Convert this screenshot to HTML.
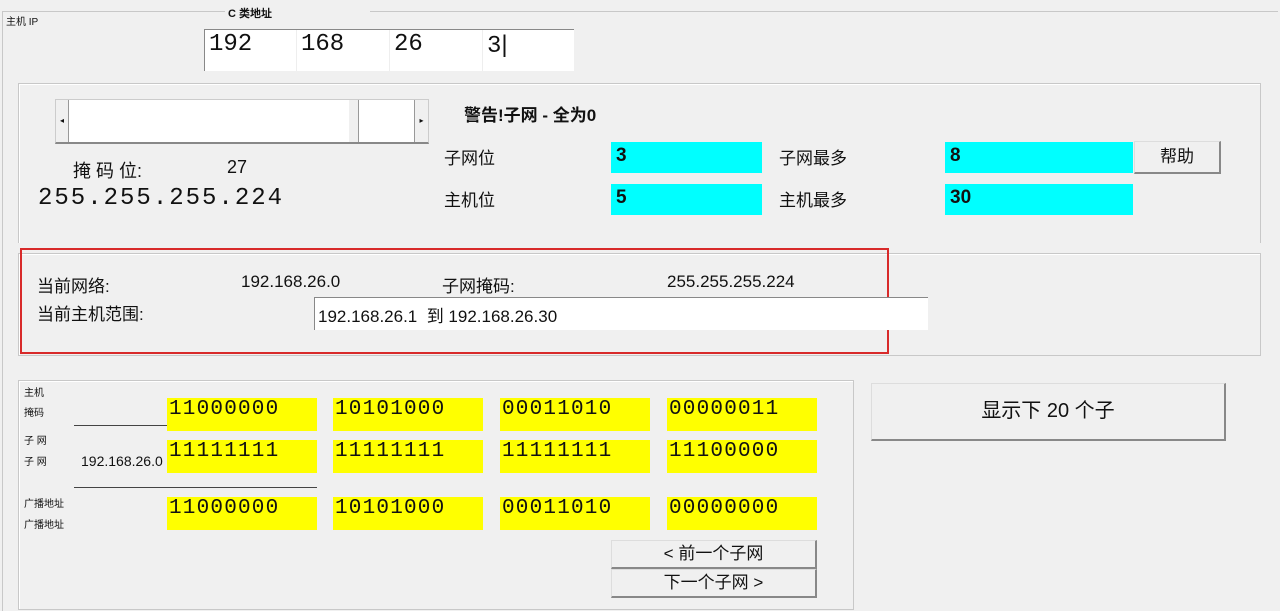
<!DOCTYPE html><html><head><meta charset="utf-8"><style>
body{margin:0;width:1280px;height:604px;background:#f0f0f0;position:relative;overflow:hidden;font-family:"Liberation Sans","Noto Sans CJK SC",sans-serif;color:#111}
div{position:absolute;box-sizing:border-box}
.t{white-space:nowrap}
.grp{border:1px solid #c8c8c8;box-shadow:1px 1px 0 #fff inset}
.y{background:#ffff00;font-family:"Liberation Mono",monospace;font-size:21px;letter-spacing:1.2px;padding-left:2px;line-height:24px}
.c{background:#00ffff;font-size:19px;font-weight:bold;padding-left:5px;line-height:26px}
.btn{background:#f0f0f0;border:1px solid #ddd;border-right:2px solid #888;border-bottom:2px solid #888;text-align:center}
</style></head><body>
<div style="left:2px;top:11px;width:1276px;height:600px;border-left:1px solid #c8c8c8;border-top:1px solid #c8c8c8"></div>
<div class="t" style="left:6px;top:13px;font-size:10px">主机 IP</div>
<div class="t" style="left:225px;top:5px;font-size:11px;font-weight:bold;background:#f0f0f0;padding:0 3px;width:145px;height:12px">C 类地址</div>
<div style="left:204px;top:29px;width:370px;height:42px;background:#fff;border-left:1px solid #888;border-top:1px solid #888"></div>
<div style="left:296px;top:30px;width:1px;height:41px;background:#eee"></div>
<div style="left:389px;top:30px;width:1px;height:41px;background:#eee"></div>
<div style="left:482px;top:30px;width:1px;height:41px;background:#eee"></div>
<div class="t" style="left:209px;top:31px;font-family:'Liberation Mono',monospace;font-size:24px">192</div>
<div class="t" style="left:301px;top:31px;font-family:'Liberation Mono',monospace;font-size:24px">168</div>
<div class="t" style="left:394px;top:31px;font-family:'Liberation Mono',monospace;font-size:24px">26</div>
<div class="t" style="left:487px;top:31px;font-family:'Liberation Mono',monospace;font-size:24px">3<span style="font-family:'Liberation Sans'">|</span></div>

<div class="grp" style="left:18px;top:83px;width:1243px;height:160px;border-bottom:none"></div>
<div style="left:55px;top:99px;width:374px;height:45px;background:#fff;border:1px solid #ccc;border-bottom:2px solid #888"></div>
<div style="left:56px;top:100px;width:13px;height:42px;background:#f0f0f0;border-right:1px solid #999;font-size:8px;line-height:42px;text-align:center">◂</div>
<div style="left:414px;top:100px;width:14px;height:42px;background:#f0f0f0;border-left:1px solid #999;font-size:8px;line-height:42px;text-align:center">▸</div>
<div style="left:349px;top:100px;width:10px;height:42px;background:#f0f0f0;border-right:1px solid #999"></div>
<div class="t" style="left:73px;top:157px;font-size:18px">掩 码 位:</div>
<div class="t" style="left:227px;top:157px;font-size:18px">27</div>
<div class="t" style="left:38px;top:185px;font-family:'Liberation Mono',monospace;font-size:24px;letter-spacing:2px">255.255.255.224</div>
<div class="t" style="left:464px;top:101px;font-size:17px;font-weight:bold">警告!子网 - 全为0</div>
<div class="t" style="left:444px;top:144px;font-size:17px">子网位</div>
<div class="t" style="left:444px;top:186px;font-size:17px">主机位</div>
<div class="t" style="left:779px;top:144px;font-size:17px">子网最多</div>
<div class="t" style="left:779px;top:186px;font-size:17px">主机最多</div>
<div class="c" style="left:611px;top:142px;width:151px;height:31px;line-height:28px">3</div>
<div class="c" style="left:611px;top:184px;width:151px;height:31px;line-height:28px">5</div>
<div class="c" style="left:945px;top:142px;width:188px;height:31px;line-height:28px">8</div>
<div class="c" style="left:945px;top:184px;width:188px;height:31px;line-height:28px">30</div>
<div class="btn" style="left:1134px;top:141px;width:87px;height:33px;font-size:17px;line-height:30px">帮助</div>

<div class="grp" style="left:18px;top:253px;width:1243px;height:103px"></div>
<div style="left:20px;top:248px;width:869px;height:106px;border:2px solid #d82a2a"></div>
<div class="t" style="left:37px;top:272px;font-size:17px">当前网络:</div>
<div class="t" style="left:241px;top:272px;font-size:17px">192.168.26.0</div>
<div class="t" style="left:442px;top:272px;font-size:17px">子网掩码:</div>
<div class="t" style="left:667px;top:272px;font-size:17px">255.255.255.224</div>
<div class="t" style="left:37px;top:300px;font-size:17px">当前主机范围:</div>
<div style="left:314px;top:297px;width:614px;height:33px;background:#fff;border-left:1px solid #888;border-top:1px solid #888;font-size:17px;padding:4px 3px">192.168.26.1 &nbsp;到 192.168.26.30</div>

<div class="grp" style="left:18px;top:380px;width:836px;height:230px"></div>
<div class="t" style="left:24px;top:384px;font-size:10px">主机</div>
<div class="t" style="left:24px;top:404px;font-size:10px">掩码</div>
<div class="t" style="left:24px;top:432px;font-size:10px">子 网</div>
<div class="t" style="left:24px;top:453px;font-size:10px">子 网</div>
<div class="t" style="left:24px;top:495px;font-size:10px">广播地址</div>
<div class="t" style="left:24px;top:516px;font-size:10px">广播地址</div>
<div style="left:74px;top:425px;width:94px;height:1px;background:#444"></div>
<div style="left:74px;top:487px;width:243px;height:1px;background:#444"></div>
<div class="t" style="left:81px;top:453px;font-size:14px;width:86px;overflow:hidden">192.168.26.0</div>
<div class="y" style="left:167px;top:398px;width:150px;height:33px">11000000</div>
<div class="y" style="left:333px;top:398px;width:150px;height:33px">10101000</div>
<div class="y" style="left:500px;top:398px;width:150px;height:33px">00011010</div>
<div class="y" style="left:667px;top:398px;width:150px;height:33px">00000011</div>
<div class="y" style="left:167px;top:440px;width:150px;height:33px">11111111</div>
<div class="y" style="left:333px;top:440px;width:150px;height:33px">11111111</div>
<div class="y" style="left:500px;top:440px;width:150px;height:33px">11111111</div>
<div class="y" style="left:667px;top:440px;width:150px;height:33px">11100000</div>
<div class="y" style="left:167px;top:497px;width:150px;height:33px">11000000</div>
<div class="y" style="left:333px;top:497px;width:150px;height:33px">10101000</div>
<div class="y" style="left:500px;top:497px;width:150px;height:33px">00011010</div>
<div class="y" style="left:667px;top:497px;width:150px;height:33px">00000000</div>
<div class="btn" style="left:611px;top:540px;width:206px;height:29px;font-size:17px;line-height:26px">&lt; 前一个子网</div>
<div class="btn" style="left:611px;top:569px;width:206px;height:29px;font-size:17px;line-height:26px">下一个子网 &gt;</div>
<div class="btn" style="left:871px;top:383px;width:355px;height:58px;font-size:20px;line-height:55px">显示下 20 个子</div>
</body></html>
